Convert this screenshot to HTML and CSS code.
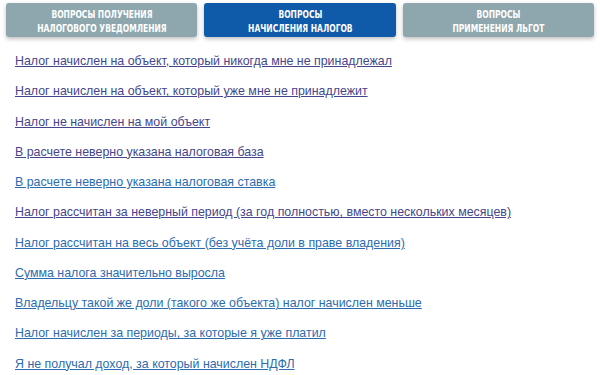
FILE: index.html
```html
<!DOCTYPE html>
<html lang="ru">
<head>
    <meta charset="UTF-8">
    <meta name="viewport" content="width=device-width, initial-scale=1.0">
    <title>Вопросы по налогам</title>
    <link rel="stylesheet" href="styles.css">
</head>
<body>
    <div class="tabs">
        <a class="tab" href="#"><span>Вопросы получения<br>налогового уведомления</span></a>
        <a class="tab active" href="#"><span>Вопросы<br>начисления налогов</span></a>
        <a class="tab" href="#"><span>Вопросы<br>применения льгот</span></a>
    </div>

    <ul class="questions">
        <li><a class="seen" href="#">Налог начислен на объект, который никогда мне не принадлежал</a></li>
        <li><a class="seen" href="#">Налог начислен на объект, который уже мне не принадлежит</a></li>
        <li><a class="seen" href="#">Налог не начислен на мой объект</a></li>
        <li><a class="seen" href="#">В расчете неверно указана налоговая база</a></li>
        <li><a href="#">В расчете неверно указана налоговая ставка</a></li>
        <li><a class="seen" href="#">Налог рассчитан за неверный период (за год полностью, вместо нескольких месяцев)</a></li>
        <li><a href="#">Налог рассчитан на весь объект (без учёта доли в праве владения)</a></li>
        <li><a href="#">Сумма налога значительно выросла</a></li>
        <li><a href="#">Владельцу такой же доли (такого же объекта) налог начислен меньше</a></li>
        <li><a href="#">Налог начислен за периоды, за которые я уже платил</a></li>
        <li><a href="#">Я не получал доход, за который начислен НДФЛ</a></li>
    </ul>
</body>
</html>
```

FILE: styles.css
```css
body {
    margin: 0;
    padding: 3px 6px 0 6px;
    background: #fff;
    font-family: "Liberation Sans", Arial, sans-serif;
}
.tabs {
    display: flex;
    gap: 7px;
}
.tab {
    flex: 1;
    height: 34px;
    display: flex;
    align-items: center;
    justify-content: center;
    text-align: center;
    background: #8ea7af;
    color: #fff;
    text-decoration: none;
    text-transform: uppercase;
    font-family: "DejaVu Sans Condensed", "DejaVu Sans", sans-serif;
    font-stretch: condensed;
    font-weight: bold;
    font-size: 10.5px;
    line-height: 14px;
    border-radius: 3px;
    box-shadow: 0 2px 4px rgba(0, 0, 0, 0.25);
}
/* шрифт в макете уже, чем DejaVu Condensed */
.tab span {
    display: inline-block;
    white-space: nowrap;
    transform: scaleX(0.8);
    padding-top: 1px;
}
.tab.active {
    background: #0f5aa9;
}
.questions {
    list-style: none;
    margin: 0;
    padding: 17px 0 0 9px;
}
.questions li {
    font-size: 12.4px;
    line-height: 15px;
    margin-bottom: 15.25px;
}
.questions a {
    color: #2b6cb0;
}
.questions a.seen {
    color: #45468a;
}
```
